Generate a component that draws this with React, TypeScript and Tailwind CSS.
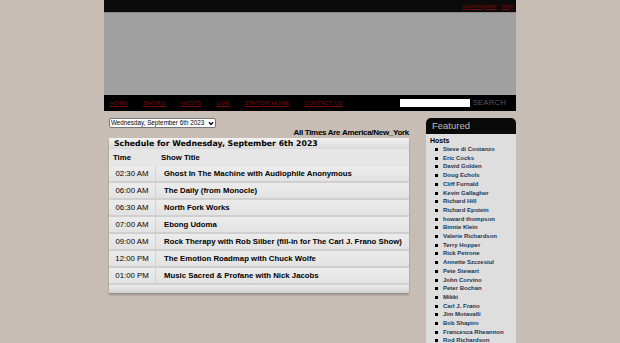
const navLinks = ["HOME", "SHOWS", "HOSTS", "LIVE", "STATION HOME", "CONTACT US"];

const shows = [
  { time: "02:30 AM", title: "Ghost In The Machine with Audiophile Anonymous" },
  { time: "06:00 AM", title: "The Daily (from Monocle)" },
  { time: "06:30 AM", title: "North Fork Works" },
  { time: "07:00 AM", title: "Ebong Udoma" },
  { time: "09:00 AM", title: "Rock Therapy with Rob Silber (fill-in for The Carl J. Frano Show)" },
  { time: "12:00 PM", title: "The Emotion Roadmap with Chuck Wolfe" },
  { time: "01:00 PM", title: "Music Sacred & Profane with Nick Jacobs" },
];

const hosts = [
  "Steve di Costanzo",
  "Eric Cocks",
  "David Golden",
  "Doug Echols",
  "Cliff Furnald",
  "Kevin Gallagher",
  "Richard Hill",
  "Richard Epstein",
  "howard thompson",
  "Binnie Klein",
  "Valerie Richardson",
  "Terry Hopper",
  "Rick Petrone",
  "Annette Szczesiul",
  "Pete Stewart",
  "John Corvino",
  "Peter Bochan",
  "Mikki",
  "Carl J. Frano",
  "Jim Motavalli",
  "Bob Shapiro",
  "Francesca Rheannon",
  "Rod Richardson",
];

export default function App() {
  return (
    <div className="h-[343px] overflow-hidden bg-[#c7bdb4] font-['Liberation_Sans',Arial,sans-serif]">
      <div className="mx-auto w-[412px]">
        <div className="flex h-[12px] items-center justify-end gap-[5px] bg-[#0b0b0b] pr-[3px] text-[6px] text-[#7a0c0c]">
          <a className="underline">login/register</a>
          <a className="underline">help</a>
        </div>
        <div className="h-[83px] border-t border-[#888] bg-[#a0a0a0]" />
        <div className="flex h-[16px] items-center bg-black pl-[6px] pr-[10px]">
          <div className="flex gap-[15px] text-[6px] text-[#7a0c0c]">
            {navLinks.map((l) => (
              <a key={l} className="underline">
                {l}
              </a>
            ))}
          </div>
          <input className="ml-auto h-[8px] w-[70px] bg-white" />
          <span className="ml-[3px] text-[8px] leading-none font-light text-[#555]">SEARCH</span>
        </div>

        <div className="flex pt-[7px]">
          <div className="ml-[5px] w-[300px]">
            <div className="flex h-[10px] w-[107px] items-center justify-between rounded-[2px] border border-[#777] bg-white px-[1px] text-[6.3px] text-black">
              <span>Wednesday, September 6th 2023</span>
              <svg width="6" height="5" viewBox="0 0 6 5">
                <path d="M1 1.2 L3 3.5 L5 1.2" stroke="black" strokeWidth="1.3" fill="none" />
              </svg>
            </div>
            <div className="text-right text-[8px] leading-[10px] font-bold tracking-[-0.3px] text-black">
              All Times Are America/New_York
            </div>
            <div className="shadow-[0_2px_2px_rgba(0,0,0,0.25)]">
              <div className="h-[11px] bg-gradient-to-b from-[#f2f2f2] to-[#d9d9d9] pl-[5px] font-['DejaVu_Sans',sans-serif] text-[7.8px] leading-[11px] font-bold text-black">
                Schedule for Wednesday, September 6th 2023
              </div>
              <div className="flex h-[17px] items-center bg-[#e6e6e6] text-[7.8px] font-bold text-black">
                <span className="w-[47px] pl-[4px]">Time</span>
                <span className="pl-[5px]">Show Title</span>
              </div>
              {shows.map((s) => (
                <div
                  key={s.time}
                  className="flex h-[17px] items-center border-b-[2px] border-[#cfcfcf] bg-gradient-to-b from-[#ececec] to-[#e2e2e2] text-[7.8px] text-black"
                >
                  <span className="flex h-full w-[47px] items-center justify-center border-r border-[#d2d2d2]">{s.time}</span>
                  <span className="truncate pl-[8px] font-bold">{s.title}</span>
                </div>
              ))}
              <div className="h-[8px] bg-gradient-to-b from-[#ededed] to-[#cfcfcf]" />
            </div>
          </div>

          <div className="ml-auto w-[90px]">
            <div className="flex h-[16px] items-center rounded-t-[5px] bg-[#0a0a0a] pl-[6px] text-[9.5px] font-light text-[#bdbdbd]">
              Featured
            </div>
            <div className="h-[300px] bg-[#dedede] px-[4px] pt-[2px]">
              <div className="text-[7px] leading-[9px] font-bold text-black">Hosts</div>
              <ul className="pl-[13px]">
                {hosts.map((h) => (
                  <li key={h} className="relative text-[6px] leading-[8.7px] font-bold text-[#1e3550]">
                    <span className="absolute -left-[8px] top-[3px] h-[3px] w-[3px] bg-black" />
                    {h}
                  </li>
                ))}
              </ul>
            </div>
          </div>
        </div>
      </div>
    </div>
  );
}
